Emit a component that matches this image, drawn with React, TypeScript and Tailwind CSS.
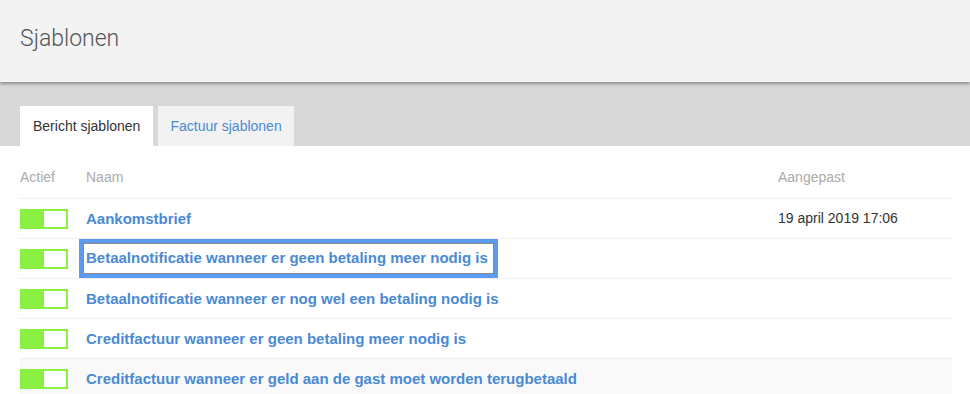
import { useState } from 'react';

type Template = { name: string; updated?: string; active: boolean };

const TEMPLATES: Template[] = [
  { name: 'Aankomstbrief', updated: '19 april 2019 17:06', active: true },
  { name: 'Betaalnotificatie wanneer er geen betaling meer nodig is', active: true },
  { name: 'Betaalnotificatie wanneer er nog wel een betaling nodig is', active: true },
  { name: 'Creditfactuur wanneer er geen betaling meer nodig is', active: true },
  { name: 'Creditfactuur wanneer er geld aan de gast moet worden terugbetaald', active: true },
];

function Toggle({ on }: { on: boolean }) {
  return (
    <div className={`flex h-[20px] w-[48px] items-center justify-end p-[2px] ${on ? 'bg-[#8af044]' : 'bg-[#ccc]'}`}>
      <div className="h-[16px] w-[22px] bg-white" />
    </div>
  );
}

export default function App() {
  const [tab, setTab] = useState<'bericht' | 'factuur'>('bericht');
  const focused = 1;

  return (
    <div className="h-[394px] w-[970px] overflow-hidden bg-white font-['Liberation_Sans',Arial,sans-serif]">
      {/* Header */}
      <div className="relative z-10 flex h-[82px] items-center bg-[#f3f3f3] px-5 shadow-[0_2px_3px_rgba(0,0,0,0.35)]">
        <h1 className="pb-1 font-['Roboto',sans-serif] text-[23px] font-light text-[#555]">Sjablonen</h1>
      </div>

      {/* Tabs */}
      <div className="flex h-[64px] items-end gap-[5px] bg-[#d8d8d8] px-5">
        <button
          onClick={() => setTab('bericht')}
          className={`h-[40px] px-[13px] text-[14px] ${tab === 'bericht' ? 'bg-white text-[#333]' : 'bg-[#f2f2f2] text-[#4a8bd3]'}`}
        >
          Bericht sjablonen
        </button>
        <button
          onClick={() => setTab('factuur')}
          className={`h-[40px] px-[12px] text-[14px] ${tab === 'factuur' ? 'bg-white text-[#333]' : 'bg-[#f2f2f2] text-[#4a8bd3]'}`}
        >
          Factuur sjablonen
        </button>
      </div>

      {/* Table */}
      <div className="px-5 pr-[18px]">
        <div className="flex h-[53px] items-end border-b border-[#eee] pb-[10px] text-[14px] text-[#aaa]">
          <div className="w-[66px]">Actief</div>
          <div className="flex-1">Naam</div>
          <div className="w-[174px]">Aangepast</div>
        </div>
        {TEMPLATES.map((t, i) => (
          <div
            key={t.name}
            className={`flex h-[40px] items-center border-b border-[#eee] ${i === 4 ? 'bg-[#f9f9f9]' : ''}`}
          >
            <div className="w-[66px]">
              <Toggle on={t.active} />
            </div>
            <div className="flex-1">
              <a
                href="#"
                className={`text-[15px] font-bold text-[#4a8ad3] ${
                  i === focused ? '-ml-[7px] inline-block border-[4px] border-[#5b9cf2] py-[4px] pl-[3px] pr-[6px] shadow-[inset_0_0_0_1px_#8a8a8a]' : ''
                }`}
              >
                {t.name}
              </a>
            </div>
            <div className="w-[174px] text-[14px] text-[#333]">{t.updated}</div>
          </div>
        ))}
      </div>
    </div>
  );
}
